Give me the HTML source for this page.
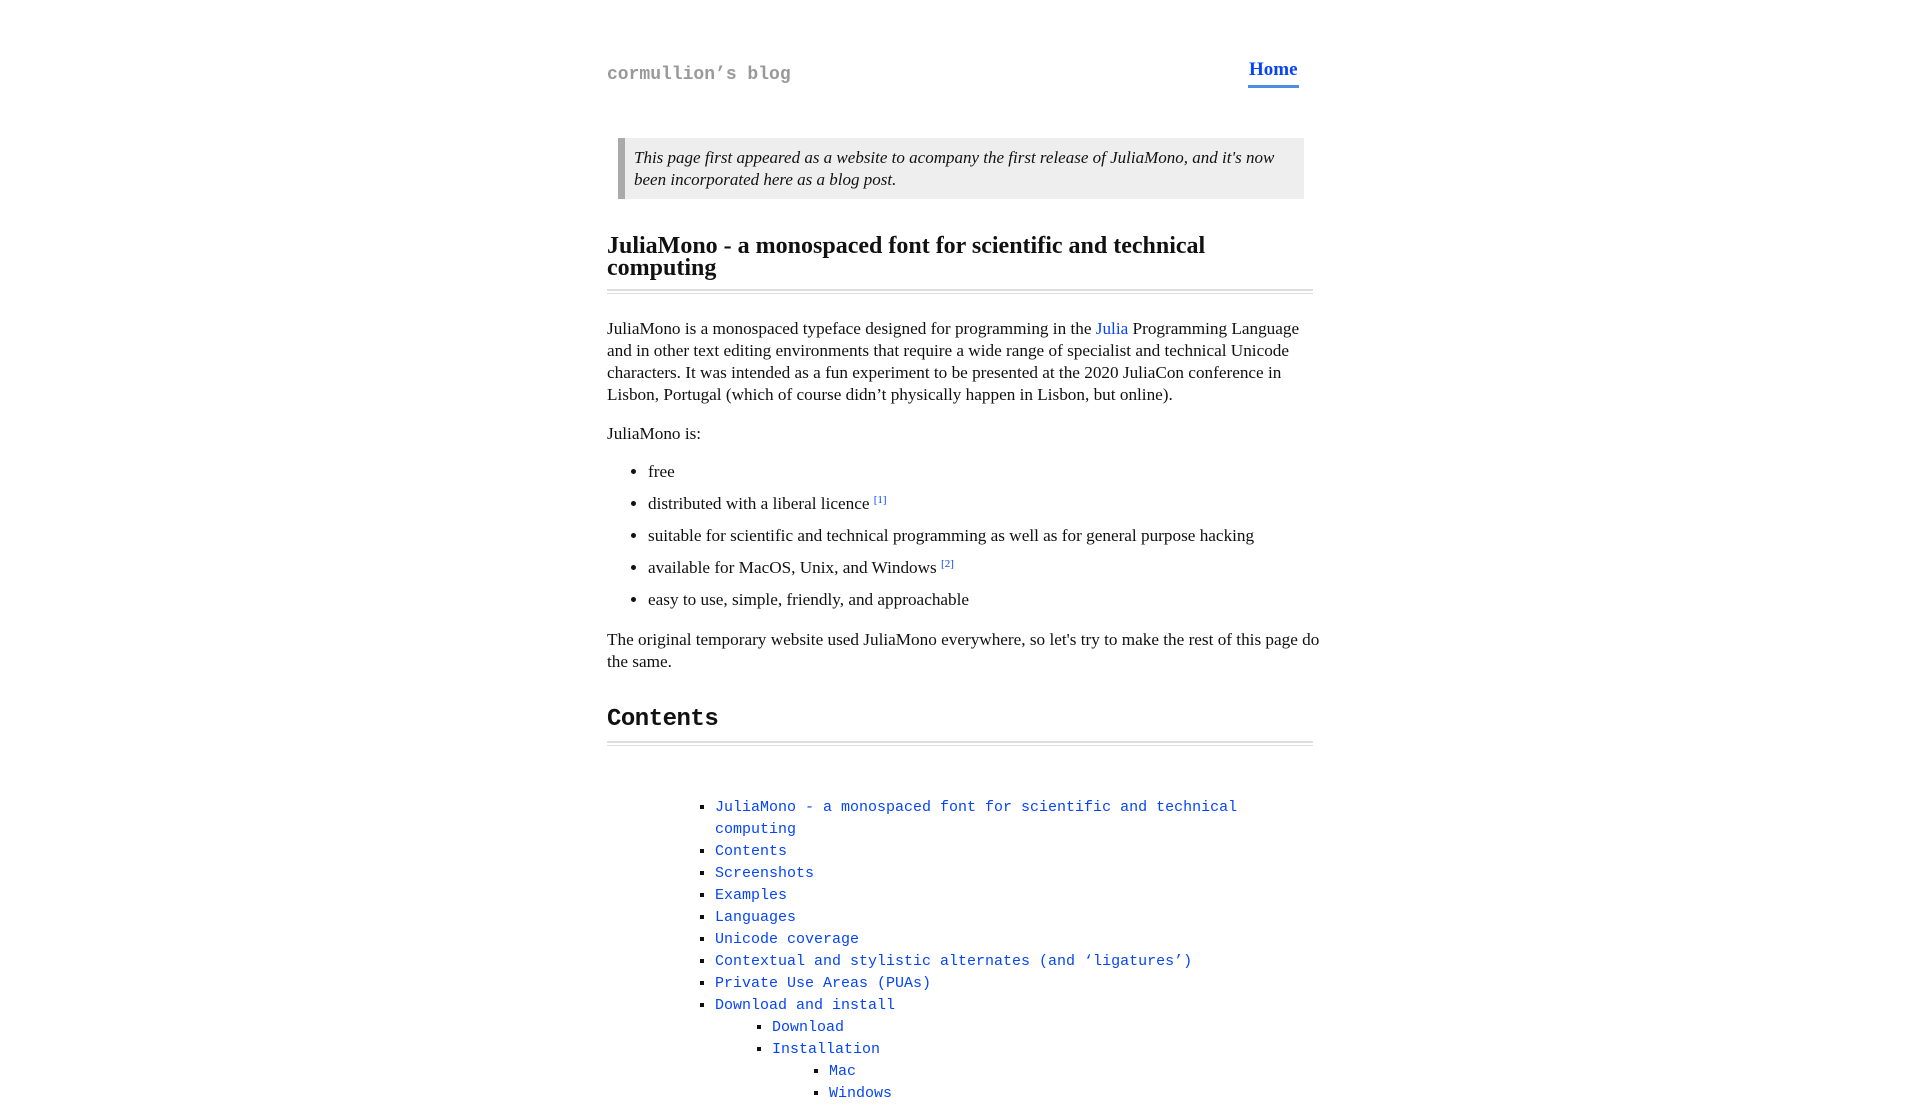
<!DOCTYPE html>
<html><head><meta charset="utf-8"><style>
body{margin:0;background:#fff;font-family:"Liberation Serif",serif;font-size:17.2px;color:#111;overflow:hidden}
.wrap{position:absolute;left:607px;width:706px;top:0;}
a{color:#0645f5;text-decoration:none}
.site{position:absolute;top:65px;left:0;font-family:"Liberation Mono",monospace;font-size:18px;color:#999;font-weight:bold}
.home{position:absolute;top:59px;left:641px;font-weight:bold;font-size:19px;color:#0645f5;padding:0 1px 4px;border-bottom:3px solid #4a90e2}
.bq{position:absolute;top:138px;left:11px;width:686px;height:61px;background:#eee;border-left:7px solid #aaa;font-style:italic;padding:9px 0 0 9px;box-sizing:border-box;line-height:22px;font-size:17px}
h1{position:absolute;top:235px;margin:0;font-size:24px;line-height:22px;width:706px}
.hr{position:absolute;left:0;width:706px;height:2px;border-top:2px solid #ddd;border-bottom:1px solid #ddd}
.p{position:absolute;left:0;width:712px;line-height:22px;margin:0}
ul.b{position:absolute;left:0;top:461px;margin:0;padding-left:41px;}
ul.b li{height:32px;line-height:22px}
sup{font-size:11px;color:#0645f5;line-height:0;vertical-align:6px}
h2{position:absolute;top:706px;margin:0;font-family:"Liberation Mono",monospace;font-size:24px;font-weight:bold;letter-spacing:-0.5px}
.toc{position:absolute;top:797px;left:95px;margin:0;padding-left:13px;font-family:"Liberation Mono",monospace;font-size:15px;line-height:22px;list-style:square;width:560px}
.toc ul{margin:0;padding-left:57px;list-style:square}
</style></head><body><div class="wrap">
<div class="site">cormullion’s blog</div>
<a class="home">Home</a>
<div class="bq">This page first appeared as a website to acompany the first release of JuliaMono, and it's now been incorporated here as a blog post.</div>
<h1>JuliaMono - a monospaced font for scientific and technical computing</h1>
<div class="hr" style="top:289px"></div>
<p class="p" style="top:318px">JuliaMono is a monospaced typeface designed for programming in the <a>Julia</a> Programming Language and in other text editing environments that require a wide range of specialist and technical Unicode characters. It was intended as a fun experiment to be presented at the 2020 JuliaCon conference in Lisbon, Portugal (which of course didn’t physically happen in Lisbon, but online).</p>
<p class="p" style="top:423px">JuliaMono is:</p>
<ul class="b">
<li>free</li>
<li>distributed with a liberal licence <sup>[1]</sup></li>
<li>suitable for scientific and technical programming as well as for general purpose hacking</li>
<li>available for MacOS, Unix, and Windows <sup>[2]</sup></li>
<li>easy to use, simple, friendly, and approachable</li>
</ul>
<p class="p" style="top:629px;width:730px">The original temporary website used JuliaMono everywhere, so let's try to make the rest of this page do the same.</p>
<h2>Contents</h2>
<div class="hr" style="top:741px"></div>
<ul class="toc">
<li><a>JuliaMono - a monospaced font for scientific and technical computing</a></li>
<li><a>Contents</a></li>
<li><a>Screenshots</a></li>
<li><a>Examples</a></li>
<li><a>Languages</a></li>
<li><a>Unicode coverage</a></li>
<li><a>Contextual and stylistic alternates (and ‘ligatures’)</a></li>
<li><a>Private Use Areas (PUAs)</a></li>
<li><a>Download and install</a>
<ul><li><a>Download</a></li><li><a>Installation</a><ul><li><a>Mac</a></li><li><a>Windows</a></li></ul></li></ul></li>
</ul>
</div></body></html>
